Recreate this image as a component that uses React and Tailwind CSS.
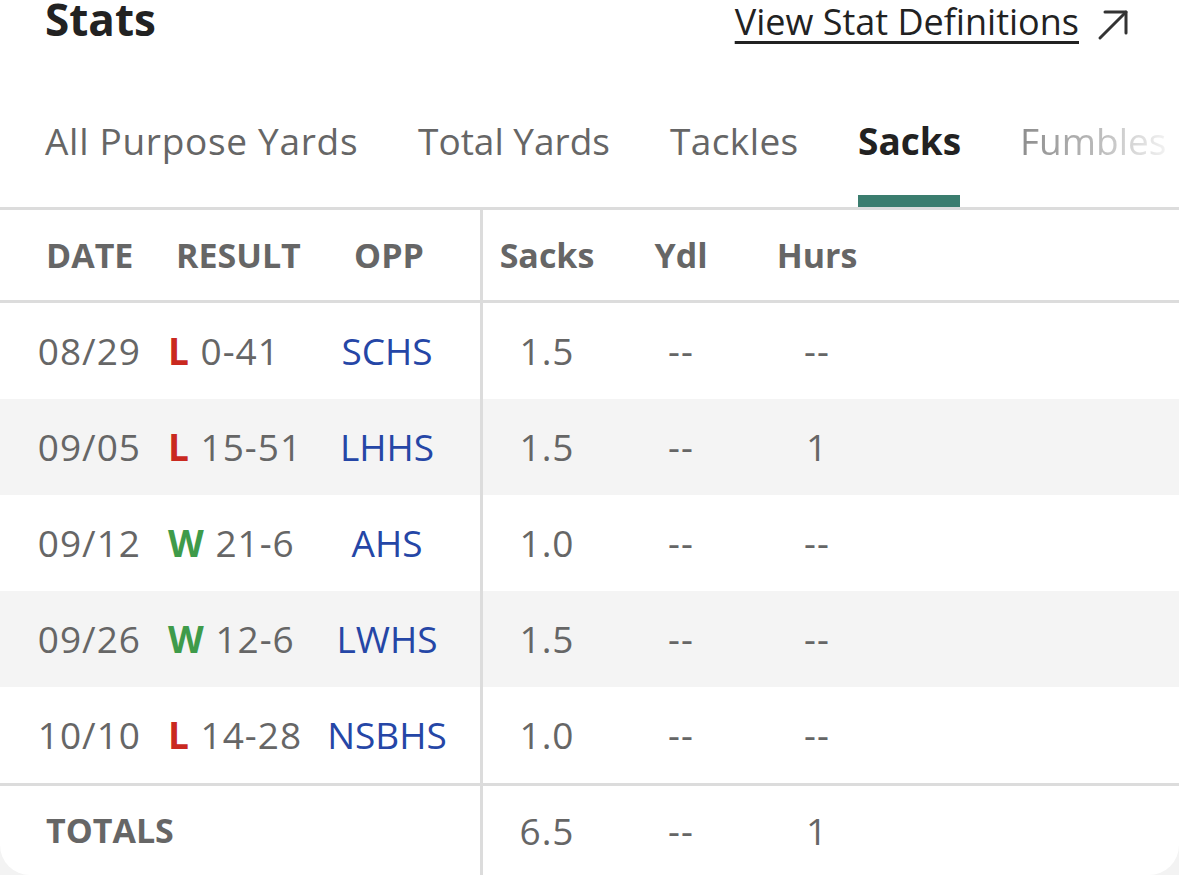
import React from "react";

const rows = [
  { date: "08/29", r: "L", score: "0-41", opp: "SCHS", sacks: "1.5", ydl: "--", hurs: "--" },
  { date: "09/05", r: "L", score: "15-51", opp: "LHHS", sacks: "1.5", ydl: "--", hurs: "1" },
  { date: "09/12", r: "W", score: "21-6", opp: "AHS", sacks: "1.0", ydl: "--", hurs: "--" },
  { date: "09/26", r: "W", score: "12-6", opp: "LWHS", sacks: "1.5", ydl: "--", hurs: "--" },
  { date: "10/10", r: "L", score: "14-28", opp: "NSBHS", sacks: "1.0", ydl: "--", hurs: "--" },
];

function Arrow() {
  return (
    <svg width="32" height="32" viewBox="0 0 32 32" fill="none" stroke="#333" strokeWidth="3" strokeLinecap="round" strokeLinejoin="round">
      <path d="M3 29 L29 3" />
      <path d="M8 3 H29 V24" />
    </svg>
  );
}

export default function App() {
  return (
    <div className="h-[875px] w-[1179px] overflow-hidden bg-[#f3f3f3] font-['Open_Sans','Noto_Sans',sans-serif]">
      <div className="h-[875px] w-[1179px] overflow-hidden rounded-b-[30px] bg-white">
        {/* Header */}
        <div className="flex h-[44px] items-start justify-between">
          <div className="pl-[45px] text-[44px] font-bold leading-[39px] text-[#222]">Stats</div>
          <div className="flex items-center gap-[18px] pr-[50px]">
            <span className="text-[36px] font-medium leading-[44px] text-[#222] underline decoration-[3px] underline-offset-[6px]">
              View Stat Definitions
            </span>
            <div className="mt-[6px]">
              <Arrow />
            </div>
          </div>
        </div>

        {/* Tabs */}
        <div className="flex gap-[60px] overflow-hidden whitespace-nowrap pl-[45px] pt-[73px]">
          <div className="flex w-[313px] shrink-0 flex-col">
            <span className="text-[37px] font-medium leading-[48px] tracking-[0.7px] text-[#666]">All Purpose Yards</span>
          </div>
          <div className="flex w-[192px] shrink-0 flex-col">
            <span className="text-[37px] font-medium leading-[48px] text-[#666]">Total Yards</span>
          </div>
          <div className="flex w-[128px] shrink-0 flex-col">
            <span className="text-[37px] font-medium leading-[48px] tracking-[0.4px] text-[#666]">Tackles</span>
          </div>
          <div className="flex w-[102px] shrink-0 flex-col">
            <span className="text-[37px] font-bold leading-[48px] text-[#222]">Sacks</span>
            <div className="mt-[30px] h-[12px] w-full bg-[#3b7d6f]" />
          </div>
          <div className="flex shrink-0 flex-col">
            <span className="bg-gradient-to-r from-[#8d8d8d] via-[#b8b8b8] to-[#f2f2f2] bg-clip-text text-[37px] font-medium leading-[48px] text-transparent">
              Fumbles
            </span>
          </div>
        </div>
        <div className="h-[3px] w-full bg-[#dcdcdc]" />

        {/* Table header */}
        <div className="flex h-[93px] border-b-[3px] border-[#dcdcdc] text-[34px] font-bold text-[#666]">
          <div className="flex w-[483px] shrink-0 items-center border-r-[3px] border-[#dcdcdc]">
            <div className="w-[152px] pl-[46px]">DATE</div>
            <div className="w-[166px] pl-[24px]">RESULT</div>
            <div className="w-[162px] pr-[20px] text-center">OPP</div>
          </div>
          <div className="flex items-center">
            <div className="w-[128px] text-center">Sacks</div>
            <div className="w-[140px] text-center">Ydl</div>
            <div className="w-[132px] text-center">Hurs</div>
          </div>
        </div>

        {/* Rows */}
        {rows.map((row, i) => (
          <div
            key={row.date}
            className={`flex h-[96px] text-[37px] tracking-[1px] text-[#666] ${i % 2 === 1 ? "bg-[#f4f4f4]" : "bg-white"}`}
          >
            <div className="flex w-[483px] shrink-0 items-center border-r-[3px] border-[#dcdcdc]">
              <div className="w-[152px] pr-[11px] text-right">{row.date}</div>
              <div className="w-[166px] whitespace-nowrap pl-[16px]">
                <span className={`font-bold ${row.r === "L" ? "text-[#c9291f]" : "text-[#3f9b4a]"}`}>{row.r}</span> {row.score}
              </div>
              <div className="w-[162px] pr-[24px] text-center tracking-normal text-[#2546a6]">{row.opp}</div>
            </div>
            <div className="flex items-center">
              <div className="w-[128px] text-center">{row.sacks}</div>
              <div className="w-[140px] text-center">{row.ydl}</div>
              <div className="w-[132px] text-center">{row.hurs}</div>
            </div>
          </div>
        ))}

        {/* Totals */}
        <div className="flex h-[92px] border-t-[3px] border-[#dcdcdc] text-[37px] tracking-[1px] text-[#666]">
          <div className="flex w-[483px] shrink-0 items-center border-r-[3px] border-[#dcdcdc]">
            <div className="pl-[46px] text-[34px] font-bold tracking-normal">TOTALS</div>
          </div>
          <div className="flex items-center">
            <div className="w-[128px] text-center">6.5</div>
            <div className="w-[140px] text-center">--</div>
            <div className="w-[132px] text-center">1</div>
          </div>
        </div>
      </div>
    </div>
  );
}
